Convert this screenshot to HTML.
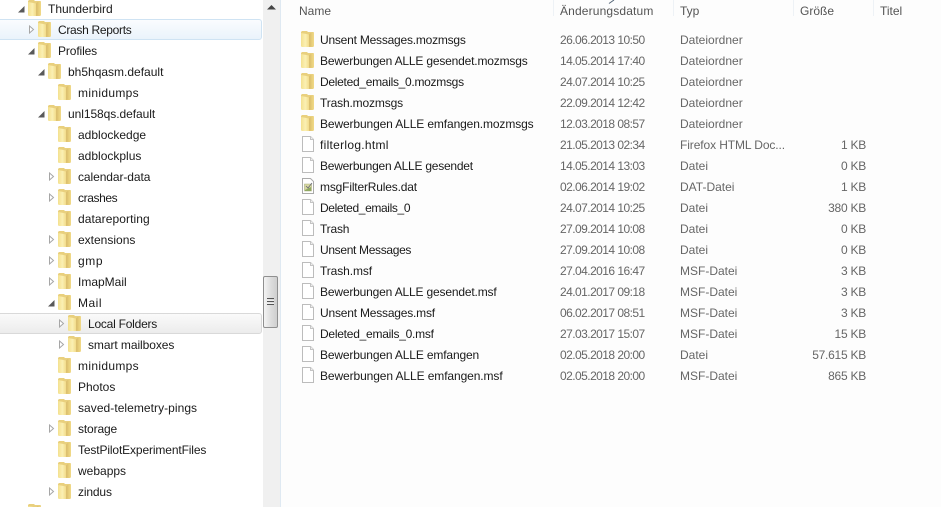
<!DOCTYPE html>
<html><head><meta charset="utf-8"><style>
html,body{margin:0;padding:0}
html{width:941px;height:507px;overflow:hidden}
body{width:941px;height:507px;overflow:hidden;position:relative;background:#fff;font-family:"Liberation Sans",sans-serif;font-size:12px;color:#1a1a1a}
.t,.c{position:absolute;white-space:nowrap;line-height:16px;height:16px}
.c{color:#666}
.dt{letter-spacing:-.55px}
.r{text-align:right;letter-spacing:-.25px}
svg.i{position:absolute;width:16px;height:18px}
.a{position:absolute;width:9px;height:9px}
.tr{margin-top:1px}
</style></head><body>
<svg width="0" height="0" style="position:absolute">
<defs>
<linearGradient id="g" x1="0" y1="0" x2="1" y2="0"><stop offset="0" stop-color="#f3e08f"/><stop offset=".55" stop-color="#fbf0b4"/><stop offset="1" stop-color="#f2dc8a"/></linearGradient>
<linearGradient id="h" x1="0" y1="0" x2="1" y2="0"><stop offset="0" stop-color="#e2c671"/><stop offset="1" stop-color="#f1da88"/></linearGradient>
<symbol id="f" viewBox="0 0 16 18"><path d="M3 1h5l1 1h5.500l.5 1v13l-1 1H3l-1-1V2z" fill="#e9d07e"/><path d="M2 3l8 1.500V17H3l-1-1z" fill="url(#g)"/><path d="M10 4.500 11.500 3v13.500L10 17z" fill="#dcc070"/><path d="M11.500 3H15v13l-1 1h-2.500z" fill="url(#h)"/></symbol>
<symbol id="d" viewBox="0 0 16 18"><path d="M2.500 1.500h8l3 3v12h-11z" fill="#fff" stroke="#bcbcbc"/><path d="M10.500 1.500v3h3" fill="#eee" stroke="#c4c4c4"/></symbol>
<symbol id="m" viewBox="0 0 16 18"><path d="M2.500 1.500h8l3 3v12h-11z" fill="#fff" stroke="#aaa"/><path d="M4.500 7h7v7h-7z" fill="#d8d8a0" stroke="#a8ae80" stroke-width=".6"/><path d="M5 13l6-3v4H5z" fill="#8fa860"/><path d="M6 9l2 2 4-5" fill="none" stroke="#667" stroke-width=".8"/></symbol>
<symbol id="o" viewBox="0 0 9 9"><path d="M2.500 1v7l4-3.500z" fill="#fff" stroke="#a6a6a6"/></symbol>
<symbol id="e" viewBox="0 0 9 9"><path d="M1 7.500h6.500V1z" fill="#595959"/></symbol>
</defs></svg>

<div style="position:absolute;left:281px;top:0;width:660px;height:507px;background:#fdfdfd"></div>

<!-- tree selection rows -->
<div style="position:absolute;left:-3px;top:19px;width:263px;height:19px;border:1px solid #cfe3f3;border-radius:3px;background:linear-gradient(#fafcfe,#eaf3fb)"></div>
<div style="position:absolute;left:-3px;top:313px;width:263px;height:19px;border:1px solid #d9d9d9;border-radius:3px;background:linear-gradient(#fafafa,#ececec)"></div>

<!-- scrollbar -->
<div style="position:absolute;left:263px;top:0;width:17px;height:507px;background:#f0f0f0"></div>
<div style="position:absolute;left:280px;top:0;width:1px;height:507px;background:#dfe9f2"></div>
<svg style="position:absolute;left:267px;top:4px" width="9" height="6"><path d="M0 5.500L4.500 1 9 5.500z" fill="#444"/></svg>
<div style="position:absolute;left:263px;top:276px;width:13px;height:50px;border:1px solid #8f8f8f;border-radius:2px;background:linear-gradient(90deg,#f4f4f4,#dcdcdc 55%,#cfcfcf)"></div>
<div style="position:absolute;left:267px;top:298px;width:7px;height:1px;background:#555;box-shadow:0 2px 0 #eee,0 3px 0 #555,0 5px 0 #eee,0 6px 0 #555"></div>

<!-- tree arrows -->
<svg class="a" style="left:17px;top:5px"><use href="#e"/></svg>
<svg class="a" style="left:27px;top:25px"><use href="#o"/></svg>
<svg class="a" style="left:27px;top:47px"><use href="#e"/></svg>
<svg class="a" style="left:37px;top:68px"><use href="#e"/></svg>
<svg class="a" style="left:37px;top:110px"><use href="#e"/></svg>
<svg class="a" style="left:47px;top:172px"><use href="#o"/></svg>
<svg class="a" style="left:47px;top:193px"><use href="#o"/></svg>
<svg class="a" style="left:47px;top:235px"><use href="#o"/></svg>
<svg class="a" style="left:47px;top:256px"><use href="#o"/></svg>
<svg class="a" style="left:47px;top:277px"><use href="#o"/></svg>
<svg class="a" style="left:47px;top:299px"><use href="#e"/></svg>
<svg class="a" style="left:57px;top:319px"><use href="#o"/></svg>
<svg class="a" style="left:57px;top:340px"><use href="#o"/></svg>
<svg class="a" style="left:47px;top:424px"><use href="#o"/></svg>
<svg class="a" style="left:47px;top:487px"><use href="#o"/></svg>

<!-- tree folders -->
<svg class="i" style="left:26px;top:-1px"><use href="#f"/></svg>
<svg class="i" style="left:36px;top:20px"><use href="#f"/></svg>
<svg class="i" style="left:36px;top:41px"><use href="#f"/></svg>
<svg class="i" style="left:46px;top:62px"><use href="#f"/></svg>
<svg class="i" style="left:56px;top:83px"><use href="#f"/></svg>
<svg class="i" style="left:46px;top:104px"><use href="#f"/></svg>
<svg class="i" style="left:56px;top:125px"><use href="#f"/></svg>
<svg class="i" style="left:56px;top:146px"><use href="#f"/></svg>
<svg class="i" style="left:56px;top:167px"><use href="#f"/></svg>
<svg class="i" style="left:56px;top:188px"><use href="#f"/></svg>
<svg class="i" style="left:56px;top:209px"><use href="#f"/></svg>
<svg class="i" style="left:56px;top:230px"><use href="#f"/></svg>
<svg class="i" style="left:56px;top:251px"><use href="#f"/></svg>
<svg class="i" style="left:56px;top:272px"><use href="#f"/></svg>
<svg class="i" style="left:56px;top:293px"><use href="#f"/></svg>
<svg class="i" style="left:66px;top:314px"><use href="#f"/></svg>
<svg class="i" style="left:66px;top:335px"><use href="#f"/></svg>
<svg class="i" style="left:56px;top:356px"><use href="#f"/></svg>
<svg class="i" style="left:56px;top:377px"><use href="#f"/></svg>
<svg class="i" style="left:56px;top:398px"><use href="#f"/></svg>
<svg class="i" style="left:56px;top:419px"><use href="#f"/></svg>
<svg class="i" style="left:56px;top:440px"><use href="#f"/></svg>
<svg class="i" style="left:56px;top:461px"><use href="#f"/></svg>
<svg class="i" style="left:56px;top:482px"><use href="#f"/></svg>
<svg class="i" style="left:26px;top:503px"><use href="#f"/></svg>

<!-- tree labels -->
<div class="t tr" style="left:48px;top:0">Thunderbird</div>
<div class="t tr" style="left:58px;top:21px;letter-spacing:-.3px">Crash Reports</div>
<div class="t tr" style="left:58px;top:42px;letter-spacing:-.12px">Profiles</div>
<div class="t tr" style="left:68px;top:63px">bh5hqasm.default</div>
<div class="t tr" style="left:78px;top:84px;letter-spacing:.33px">minidumps</div>
<div class="t tr" style="left:68px;top:105px;letter-spacing:-.06px">unl158qs.default</div>
<div class="t tr" style="left:78px;top:126px">adblockedge</div>
<div class="t tr" style="left:78px;top:147px">adblockplus</div>
<div class="t tr" style="left:78px;top:168px;letter-spacing:-.08px">calendar-data</div>
<div class="t tr" style="left:78px;top:189px;letter-spacing:-.4px">crashes</div>
<div class="t tr" style="left:78px;top:210px;letter-spacing:.08px">datareporting</div>
<div class="t tr" style="left:78px;top:231px">extensions</div>
<div class="t tr" style="left:78px;top:252px;letter-spacing:.6px">gmp</div>
<div class="t tr" style="left:78px;top:273px">ImapMail</div>
<div class="t tr" style="left:78px;top:294px;letter-spacing:.5px">Mail</div>
<div class="t tr" style="left:88px;top:315px;letter-spacing:-.23px">Local Folders</div>
<div class="t tr" style="left:88px;top:336px;letter-spacing:-.07px">smart mailboxes</div>
<div class="t tr" style="left:78px;top:357px;letter-spacing:.33px">minidumps</div>
<div class="t tr" style="left:78px;top:378px">Photos</div>
<div class="t tr" style="left:78px;top:399px;letter-spacing:.05px">saved-telemetry-pings</div>
<div class="t tr" style="left:78px;top:420px;letter-spacing:-.14px">storage</div>
<div class="t tr" style="left:78px;top:441px;letter-spacing:-.13px">TestPilotExperimentFiles</div>
<div class="t tr" style="left:78px;top:462px">webapps</div>
<div class="t tr" style="left:78px;top:483px;letter-spacing:-.15px">zindus</div>

<!-- header -->
<div class="c" style="left:299px;top:3px;color:#555">Name</div>
<div class="c" style="left:560px;top:3px;color:#555;letter-spacing:.15px">Änderungsdatum</div>
<div class="c" style="left:680px;top:3px;color:#555">Typ</div>
<div class="c" style="left:800px;top:3px;color:#555">Größe</div>
<div class="c" style="left:880px;top:3px;color:#555">Titel</div>
<div style="position:absolute;left:553px;top:0;width:1px;height:16px;background:#eef2f6"></div>
<div style="position:absolute;left:673px;top:0;width:1px;height:16px;background:#eef2f6"></div>
<div style="position:absolute;left:793px;top:0;width:1px;height:16px;background:#eef2f6"></div>
<div style="position:absolute;left:873px;top:0;width:1px;height:16px;background:#eef2f6"></div>
<svg style="position:absolute;left:608px;top:0" width="8" height="4"><path d="M1 3.500L6 0" stroke="#567" fill="none"/></svg>

<!-- file icons -->
<svg class="i" style="left:299px;top:30px"><use href="#f"/></svg>
<svg class="i" style="left:299px;top:51px"><use href="#f"/></svg>
<svg class="i" style="left:299px;top:72px"><use href="#f"/></svg>
<svg class="i" style="left:299px;top:93px"><use href="#f"/></svg>
<svg class="i" style="left:299px;top:114px"><use href="#f"/></svg>
<svg class="i" style="left:300px;top:135px"><use href="#d"/></svg>
<svg class="i" style="left:300px;top:156px"><use href="#d"/></svg>
<svg class="i" style="left:300px;top:177px"><use href="#m"/></svg>
<svg class="i" style="left:300px;top:198px"><use href="#d"/></svg>
<svg class="i" style="left:300px;top:219px"><use href="#d"/></svg>
<svg class="i" style="left:300px;top:240px"><use href="#d"/></svg>
<svg class="i" style="left:300px;top:261px"><use href="#d"/></svg>
<svg class="i" style="left:300px;top:282px"><use href="#d"/></svg>
<svg class="i" style="left:300px;top:303px"><use href="#d"/></svg>
<svg class="i" style="left:300px;top:324px"><use href="#d"/></svg>
<svg class="i" style="left:300px;top:345px"><use href="#d"/></svg>
<svg class="i" style="left:300px;top:366px"><use href="#d"/></svg>

<!-- file rows -->
<div class="t" style="left:320px;top:32px;letter-spacing:-.22px">Unsent Messages.mozmsgs</div><div class="c dt" style="left:560px;top:32px">26.06.2013 10:50</div><div class="c" style="left:680px;top:32px">Dateiordner</div>
<div class="t" style="left:320px;top:53px;letter-spacing:-.18px">Bewerbungen ALLE gesendet.mozmsgs</div><div class="c dt" style="left:560px;top:53px">14.05.2014 17:40</div><div class="c" style="left:680px;top:53px">Dateiordner</div>
<div class="t" style="left:320px;top:74px;letter-spacing:-.29px">Deleted_emails_0.mozmsgs</div><div class="c dt" style="left:560px;top:74px">24.07.2014 10:25</div><div class="c" style="left:680px;top:74px">Dateiordner</div>
<div class="t" style="left:320px;top:95px;letter-spacing:-.15px">Trash.mozmsgs</div><div class="c dt" style="left:560px;top:95px">22.09.2014 12:42</div><div class="c" style="left:680px;top:95px">Dateiordner</div>
<div class="t" style="left:320px;top:116px;letter-spacing:-.12px">Bewerbungen ALLE emfangen.mozmsgs</div><div class="c dt" style="left:560px;top:116px">12.03.2018 08:57</div><div class="c" style="left:680px;top:116px">Dateiordner</div>
<div class="t" style="left:320px;top:137px;letter-spacing:.29px">filterlog.html</div><div class="c dt" style="left:560px;top:137px">21.05.2013 02:34</div><div class="c" style="left:680px;top:137px;letter-spacing:-.1px">Firefox HTML Doc...</div><div class="c r" style="left:800px;width:66px;top:137px">1 KB</div>
<div class="t" style="left:320px;top:158px;letter-spacing:-.24px">Bewerbungen ALLE gesendet</div><div class="c dt" style="left:560px;top:158px">14.05.2014 13:03</div><div class="c" style="left:680px;top:158px">Datei</div><div class="c r" style="left:800px;width:66px;top:158px">0 KB</div>
<div class="t" style="left:320px;top:179px;letter-spacing:-.17px">msgFilterRules.dat</div><div class="c dt" style="left:560px;top:179px">02.06.2014 19:02</div><div class="c" style="left:680px;top:179px">DAT-Datei</div><div class="c r" style="left:800px;width:66px;top:179px">1 KB</div>
<div class="t" style="left:320px;top:200px;letter-spacing:-.37px">Deleted_emails_0</div><div class="c dt" style="left:560px;top:200px">24.07.2014 10:25</div><div class="c" style="left:680px;top:200px">Datei</div><div class="c r" style="left:800px;width:66px;top:200px">380 KB</div>
<div class="t" style="left:320px;top:221px;letter-spacing:-.2px">Trash</div><div class="c dt" style="left:560px;top:221px">27.09.2014 10:08</div><div class="c" style="left:680px;top:221px">Datei</div><div class="c r" style="left:800px;width:66px;top:221px">0 KB</div>
<div class="t" style="left:320px;top:242px;letter-spacing:-.33px">Unsent Messages</div><div class="c dt" style="left:560px;top:242px">27.09.2014 10:08</div><div class="c" style="left:680px;top:242px">Datei</div><div class="c r" style="left:800px;width:66px;top:242px">0 KB</div>
<div class="t" style="left:320px;top:263px;letter-spacing:-.1px">Trash.msf</div><div class="c dt" style="left:560px;top:263px">27.04.2016 16:47</div><div class="c" style="left:680px;top:263px">MSF-Datei</div><div class="c r" style="left:800px;width:66px;top:263px">3 KB</div>
<div class="t" style="left:320px;top:284px;letter-spacing:-.17px">Bewerbungen ALLE gesendet.msf</div><div class="c dt" style="left:560px;top:284px">24.01.2017 09:18</div><div class="c" style="left:680px;top:284px">MSF-Datei</div><div class="c r" style="left:800px;width:66px;top:284px">3 KB</div>
<div class="t" style="left:320px;top:305px;letter-spacing:-.2px">Unsent Messages.msf</div><div class="c dt" style="left:560px;top:305px">06.02.2017 08:51</div><div class="c" style="left:680px;top:305px">MSF-Datei</div><div class="c r" style="left:800px;width:66px;top:305px">3 KB</div>
<div class="t" style="left:320px;top:326px;letter-spacing:-.25px">Deleted_emails_0.msf</div><div class="c dt" style="left:560px;top:326px">27.03.2017 15:07</div><div class="c" style="left:680px;top:326px">MSF-Datei</div><div class="c r" style="left:800px;width:66px;top:326px">15 KB</div>
<div class="t" style="left:320px;top:347px;letter-spacing:-.15px">Bewerbungen ALLE emfangen</div><div class="c dt" style="left:560px;top:347px">02.05.2018 20:00</div><div class="c" style="left:680px;top:347px">Datei</div><div class="c r" style="left:800px;width:66px;top:347px">57.615 KB</div>
<div class="t" style="left:320px;top:368px;letter-spacing:-.1px">Bewerbungen ALLE emfangen.msf</div><div class="c dt" style="left:560px;top:368px">02.05.2018 20:00</div><div class="c" style="left:680px;top:368px">MSF-Datei</div><div class="c r" style="left:800px;width:66px;top:368px">865 KB</div>
</body></html>
